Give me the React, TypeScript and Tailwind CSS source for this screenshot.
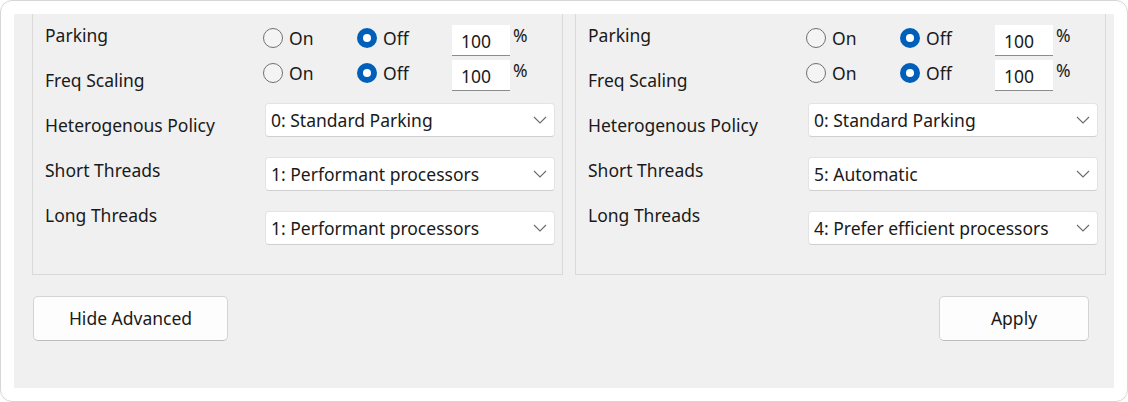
import React from 'react'

type RadioProps = { checked?: boolean; label: string; className?: string }

function Radio({ checked, label, className }: RadioProps) {
    return (
        <span className={'flex items-center gap-[6px] h-[20px] ' + (className ?? '')}>
            {checked ? (
                <span className="w-[20px] h-[20px] rounded-full bg-[#005fb8] flex items-center justify-center">
                    <span className="w-[8px] h-[8px] rounded-full bg-white" />
                </span>
            ) : (
                <span className="w-[20px] h-[20px] rounded-full border border-[#707070] bg-[#f4f4f4]" />
            )}
            <span>{label}</span>
        </span>
    )
}

function Chevron() {
    return (
        <svg width="14" height="8" viewBox="0 0 14 8" fill="none">
            <polyline points="1,1 7,7 13,1" stroke="#6a6a6a" strokeWidth="1.1" />
        </svg>
    )
}

function Select({ value }: { value: string }) {
    return (
        <div className="ml-[2px] w-[290px] h-[34px] flex items-center justify-between pl-[5px] pr-[7px] bg-white border border-[#e3e3e3] border-b-[#cfcfcf] rounded-[4px]">
            <span>{value}</span>
            <Chevron />
        </div>
    )
}

function PercentRow({ className }: { className?: string }) {
    return (
        <div className={'flex items-start ' + (className ?? '')}>
            <Radio label="On" className="w-[94px] mt-[3px]" />
            <Radio checked label="Off" className="w-[95px] mt-[3px]" />
            <div className="w-[58px] h-[31px] bg-white border-b border-[#8c8c8c] flex items-center pl-[9px] pt-[3px]">100</div>
            <span className="ml-[3px] leading-[20px]">%</span>
        </div>
    )
}

function Group({ short, long }: { short: string; long: string }) {
    const labels = ['Parking', 'Freq Scaling', 'Heterogenous Policy', 'Short Threads', 'Long Threads']
    return (
        <div className="w-[531px] h-[261px] border-x border-b border-[#d9d9d9] pl-[12px] flex">
            <div className="w-[218px] pt-[9px] flex flex-col gap-[21px]">
                {labels.map((l) => (
                    <div key={l} className="h-[24px] leading-[24px] whitespace-nowrap">{l}</div>
                ))}
            </div>
            <div className="flex flex-col">
                <PercentRow className="mt-[11px] h-[31px]" />
                <PercentRow className="mt-[4px] h-[31px]" />
                <div className="mt-[12px] flex flex-col gap-[20px]">
                    <Select value="0: Standard Parking" />
                    <Select value={short} />
                    <Select value={long} />
                </div>
            </div>
        </div>
    )
}

export default function App() {
    return (
        <div className="w-[1128px] h-[402px] bg-white border border-[#d6d6d6] rounded-[12px] p-[13px] text-[17.5px] text-[#1a1a1a]" style={{ fontFamily: '"Noto Sans", sans-serif' }}>
            <div className="w-full h-full bg-[#f0f0f0] flex flex-col">
                <div className="flex gap-[12px] ml-[18px]">
                    <Group short="1: Performant processors" long="1: Performant processors" />
                    <Group short="5: Automatic" long="4: Prefer efficient processors" />
                </div>
                <div className="mt-[21px] flex justify-between pl-[19px] pr-[25px]">
                    <button className="w-[195px] h-[45px] bg-[#fdfdfd] border border-[#d4d4d4] border-b-[#bcbcbc] rounded-[5px]">Hide Advanced</button>
                    <button className="w-[150px] h-[45px] bg-[#fdfdfd] border border-[#d4d4d4] border-b-[#bcbcbc] rounded-[5px]">Apply</button>
                </div>
            </div>
        </div>
    )
}
